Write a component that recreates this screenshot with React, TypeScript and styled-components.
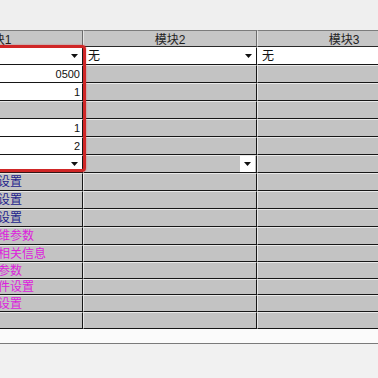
import React from 'react';
import styled, { createGlobalStyle } from 'styled-components';

const GlobalStyle = createGlobalStyle`
  html, body { margin: 0; padding: 0; background: #efefef; }
  #root { width: 378px; height: 378px; }
`;

const Page = styled.div`
  position: relative;
  width: 378px;
  height: 378px;
  overflow: hidden;
  background: #efefef;
  display: flex;
  flex-direction: column;
  font-family: "Liberation Sans", "Noto Sans CJK SC", sans-serif;
  font-size: 12px;
`;

const TopBar = styled.div`
  height: 30px;
  flex: none;
  background: #efefef;
`;

const Grid = styled.div`
  display: grid;
  grid-template-columns: repeat(3, 174px);
  grid-template-rows: 17px repeat(11, 18px) 17px 17px 16px 17px 17px;
  margin-left: -91px;
  width: 522px;
  flex: none;
`;

const HeaderCell = styled.div`
  box-sizing: border-box;
  display: flex;
  align-items: center;
  justify-content: center;
  background: #c6c6c6;
  border-top: 1px solid #7c7c7c;
  border-bottom: 1px solid #2a2a2a;
  border-right: 1px solid #6c6c6c;
  border-left: 1px solid #e4e4e4;
  color: #1e1e1e;
  font-size: 12px;
  white-space: nowrap;
  overflow: hidden;
`;

type Tone = 'white' | 'gray';

const Cell = styled.div<{ $tone: Tone; $align: 'left' | 'right'; $padRight: number }>`
  box-sizing: border-box;
  display: flex;
  align-items: center;
  justify-content: ${p => (p.$align === 'right' ? 'flex-end' : 'flex-start')};
  background: ${p => (p.$tone === 'white' ? '#ffffff' : '#c3c3c3')};
  border-right: 1px solid #161616;
  border-bottom: 1px solid #161616;
  border-top: 1px solid ${p => (p.$tone === 'white' ? '#ffffff' : '#e8e8e8')};
  border-left: 1px solid ${p => (p.$tone === 'white' ? '#ffffff' : '#e8e8e8')};
  padding: 0 ${p => p.$padRight}px 0 4px;
  white-space: nowrap;
  overflow: hidden;
`;

const Label = styled.span<{ $color: string }>`
  color: ${p => p.$color};
  font-size: 12px;
  line-height: 16px;
`;

const Value = styled.span`
  color: #111111;
  font-size: 11px;
  line-height: 16px;
`;

const ComboText = styled.span`
  flex: 1;
  color: #111111;
  font-size: 12px;
  line-height: 16px;
`;

const ComboButton = styled.div`
  box-sizing: border-box;
  width: 15px;
  height: 17px;
  margin-top: -1px;
  background: #ffffff;
  display: flex;
  align-items: center;
  justify-content: center;
`;

const ArrowBox = styled.span`
  display: inline-flex;
  margin-right: 3px;
`;

const Highlight = styled.div`
  position: absolute;
  left: -6px;
  top: 45px;
  width: 92px;
  height: 127px;
  box-sizing: border-box;
  border: 3px solid #d02626;
  border-radius: 4px;
  box-shadow: 0 0 2px rgba(214, 40, 40, 0.55);
  pointer-events: none;
`;

const WhiteBand = styled.div`
  height: 14px;
  flex: none;
  background: #fbfbfb;
`;

const Divider = styled.div`
  height: 1px;
  flex: none;
  background: #7a7a7a;
`;

const Bottom = styled.div`
  flex: 1;
  background: #f1f1f1;
`;

const Arrow: React.FC = () => (
  <svg width="7" height="4" viewBox="0 0 7 4">
    <polygon points="0,0 7,0 3.5,4" fill="#111" />
  </svg>
);

type Spec = {
  tone: Tone;
  text?: string;
  label?: string;
  color?: string;
  value?: string;
  arrow?: boolean;
  button?: boolean;
};

const NAVY = '#24248c';
const MAGENTA = '#dc22dc';

const gray: Spec = { tone: 'gray' };

const rows: Spec[][] = [
  [{ tone: 'white', arrow: true }, { tone: 'white', text: '无', arrow: true }, { tone: 'white', text: '无' }],
  [{ tone: 'white', value: '0500' }, gray, gray],
  [{ tone: 'white', value: '1' }, gray, gray],
  [gray, gray, gray],
  [{ tone: 'white', value: '1' }, gray, gray],
  [{ tone: 'white', value: '2' }, gray, gray],
  [{ tone: 'white', arrow: true }, { tone: 'gray', button: true }, gray],
  [{ tone: 'gray', label: '模拟量输入通道设置', color: NAVY }, gray, gray],
  [{ tone: 'gray', label: '模拟量输出通道设置', color: NAVY }, gray, gray],
  [{ tone: 'gray', label: '数字量输入通道设置', color: NAVY }, gray, gray],
  [{ tone: 'gray', label: '高级过程控制二维参数', color: MAGENTA }, gray, gray],
  [{ tone: 'gray', label: '模块诊断报警的相关信息', color: MAGENTA }, gray, gray],
  [{ tone: 'gray', label: '高级滤波与校准参数', color: MAGENTA }, gray, gray],
  [{ tone: 'gray', label: '外部触发中断事件设置', color: MAGENTA }, gray, gray],
  [{ tone: 'gray', label: '看门狗安全模式设置', color: MAGENTA }, gray, gray],
  [gray, gray, gray],
];

const renderCell = (s: Spec, key: string) => {
  const align: 'left' | 'right' =
    s.value || (s.arrow && !s.text) || s.button ? 'right' : 'left';
  const padRight = s.button ? 1 : s.value ? 2 : 1;
  return (
    <Cell key={key} $tone={s.tone} $align={align} $padRight={padRight}>
      {s.label && <Label $color={s.color || '#000'}>{s.label}</Label>}
      {s.value && <Value>{s.value}</Value>}
      {s.text && <ComboText>{s.text}</ComboText>}
      {s.arrow && (
        <ArrowBox>
          <Arrow />
        </ArrowBox>
      )}
      {s.button && (
        <ComboButton>
          <Arrow />
        </ComboButton>
      )}
    </Cell>
  );
};

export default function App() {
  return (
    <>
      <GlobalStyle />
      <Page>
        <TopBar />
        <Grid>
          <HeaderCell>模块1</HeaderCell>
          <HeaderCell>模块2</HeaderCell>
          <HeaderCell>模块3</HeaderCell>
          {rows.map((r, i) => r.map((c, j) => renderCell(c, `${i}-${j}`)))}
        </Grid>
        <WhiteBand />
        <Divider />
        <Bottom />
        <Highlight />
      </Page>
    </>
  );
}
